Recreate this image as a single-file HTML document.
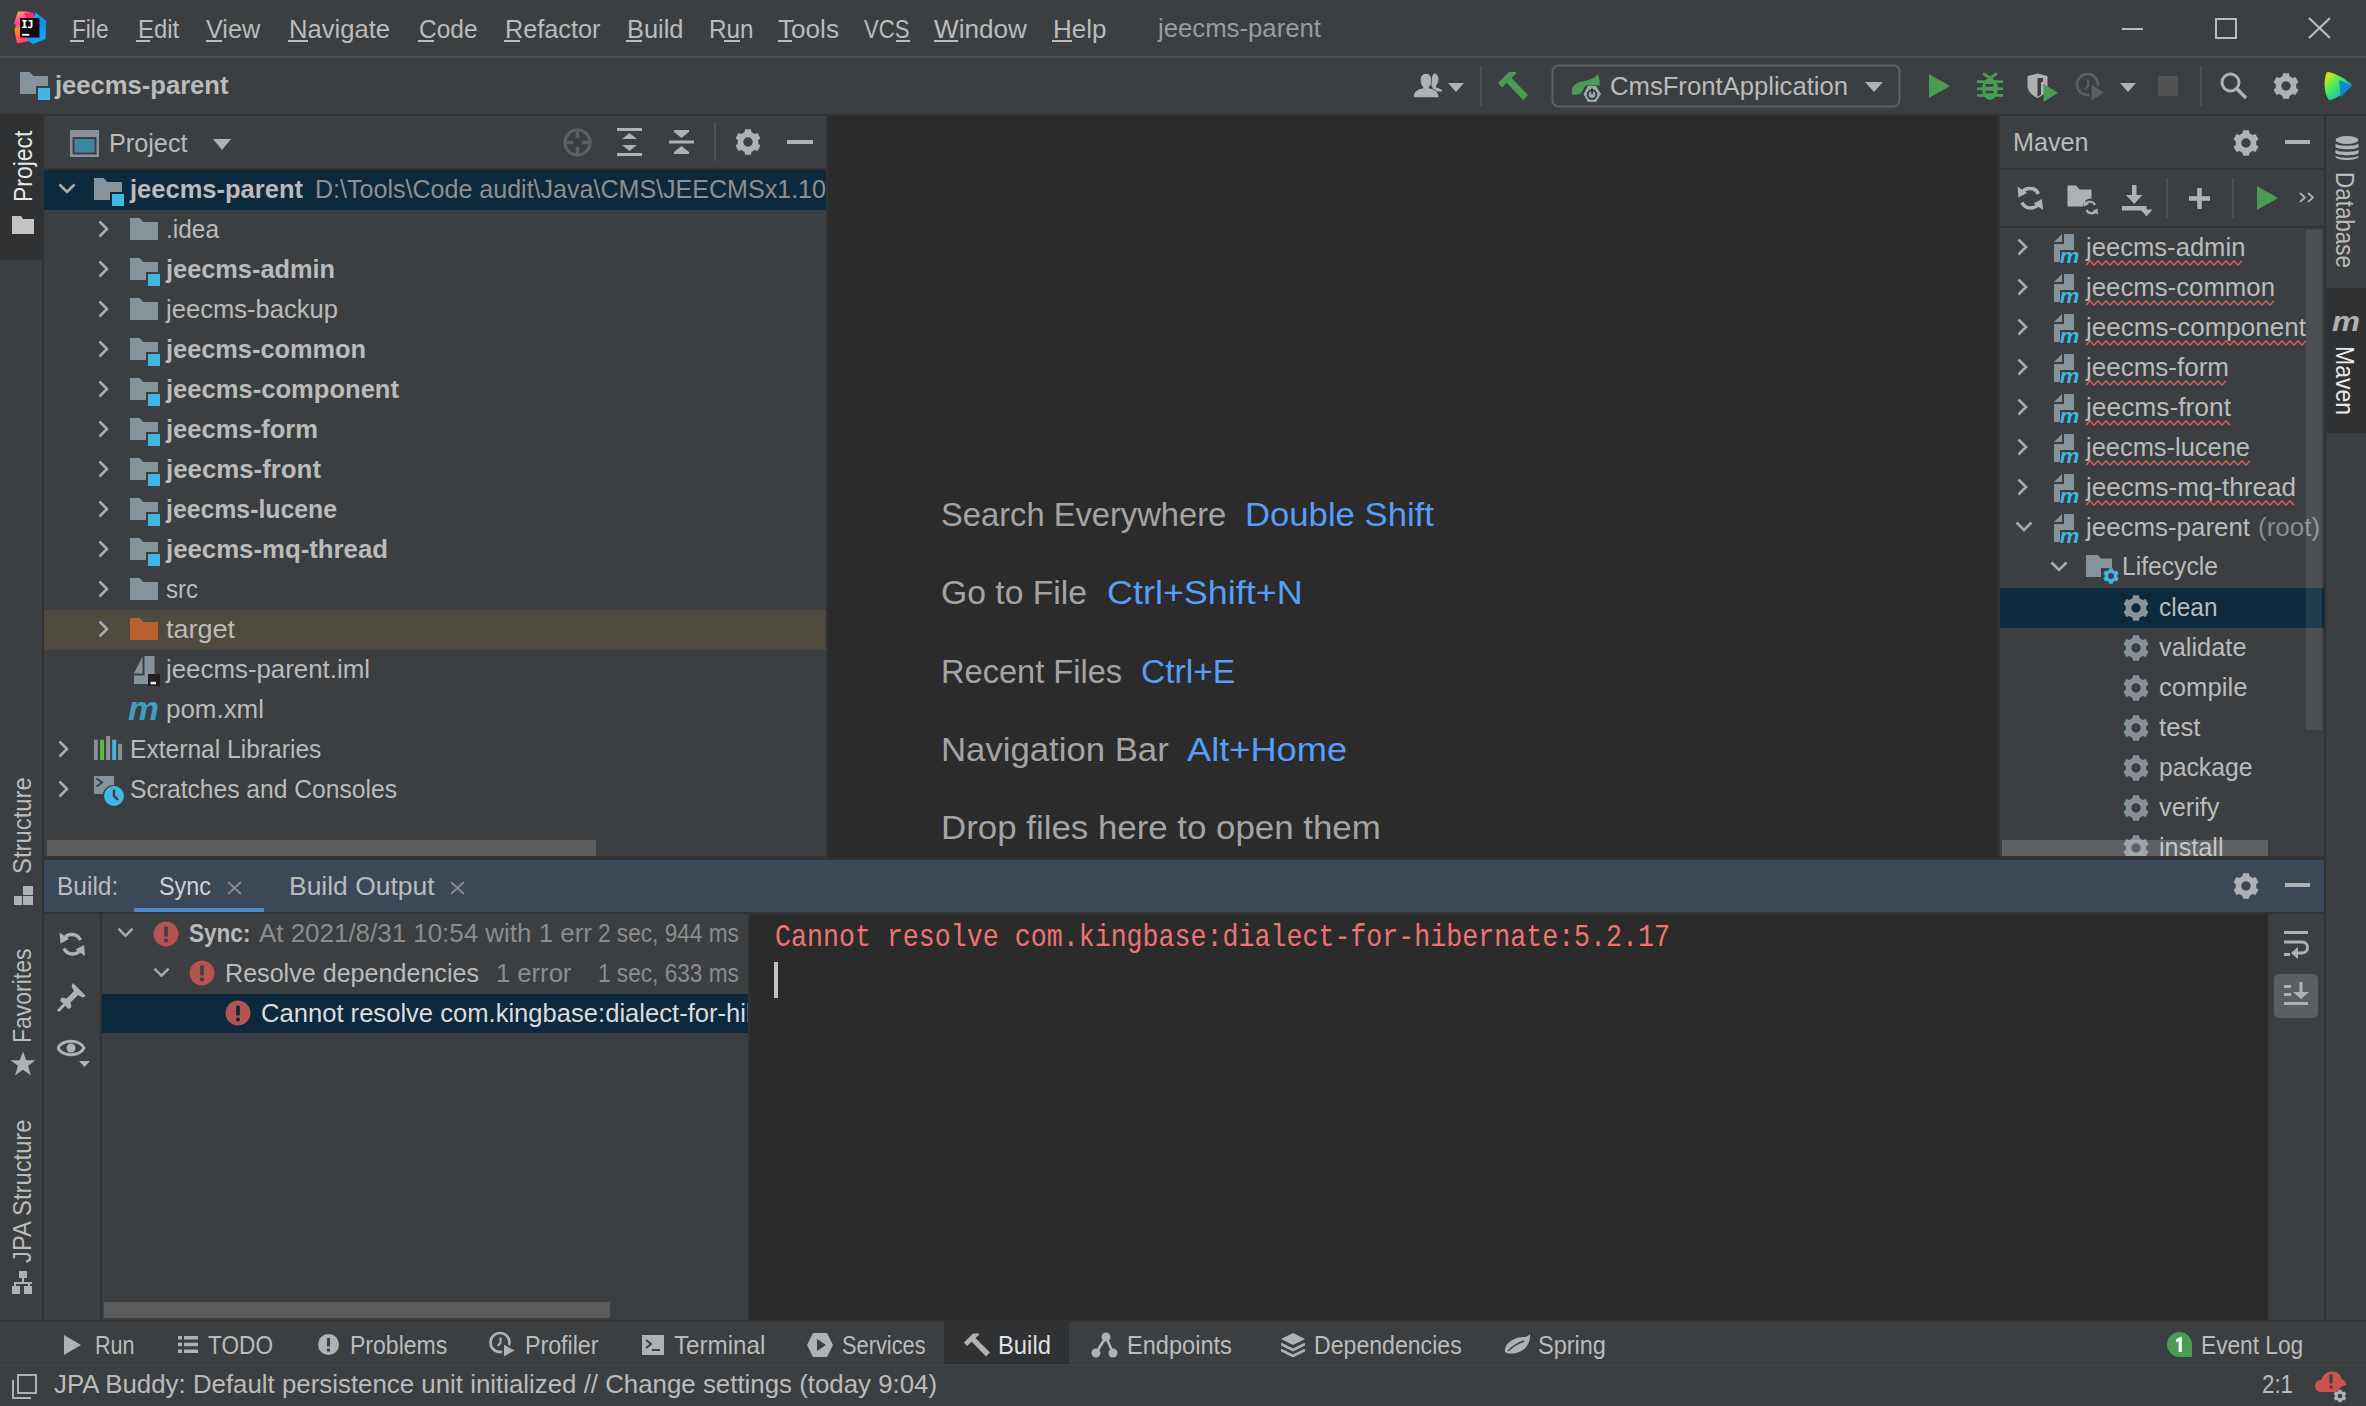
<!DOCTYPE html>
<html><head><meta charset="utf-8"><style>
html,body{margin:0;padding:0;}
body{width:2366px;height:1406px;overflow:hidden;position:relative;background:#3c3f41;font-family:'Liberation Sans', sans-serif;}
</style></head><body>
<svg width="0" height="0" style="position:absolute"><defs>
<symbol id="folder" viewBox="0 0 28 22"><path d="M0 0H9.5L13.5 4H28V22H0Z" fill="#87939a"/></symbol>
<symbol id="modfolder" viewBox="0 0 30 28"><path d="M0 0H9.5L13.5 4H28V14H16V22H0Z" fill="#87939a"/><rect x="18" y="16" width="12" height="12" fill="#40b6e0"/></symbol>
<symbol id="chevr" viewBox="0 0 11 18"><path d="M1.5 1.5L9 9L1.5 16.5" fill="none" stroke="#ababab" stroke-width="2.6"/></symbol>
<symbol id="chevd" viewBox="0 0 18 11"><path d="M1.5 1.5L9 9L16.5 1.5" fill="none" stroke="#ababab" stroke-width="2.6"/></symbol>
<symbol id="gear" viewBox="0 0 26 26"><path d="M9.47 3.32 L10.03 0.34 L15.97 0.34 L16.53 3.32 L17.08 3.54 L17.62 3.80 L18.15 4.08 L18.66 4.39 L19.15 4.74 L19.62 5.11 L22.47 4.10 L25.45 9.25 L23.14 11.22 L23.23 11.81 L23.28 12.40 L23.30 13.00 L23.28 13.60 L23.23 14.19 L23.14 14.78 L25.45 16.75 L22.47 21.90 L19.62 20.89 L19.15 21.26 L18.66 21.61 L18.15 21.92 L17.62 22.20 L17.08 22.46 L16.53 22.68 L15.97 25.66 L10.03 25.66 L9.47 22.68 L8.92 22.46 L8.38 22.20 L7.85 21.92 L7.34 21.61 L6.85 21.26 L6.38 20.89 L3.53 21.90 L0.55 16.75 L2.86 14.78 L2.77 14.19 L2.72 13.60 L2.70 13.00 L2.72 12.40 L2.77 11.81 L2.86 11.22 L0.55 9.25 L3.53 4.10 L6.38 5.11 L6.85 4.74 L7.34 4.39 L7.85 4.08 L8.38 3.80 L8.92 3.54 Z M17.70 13.00 A4.7 4.7 0 1 0 8.30 13.00 A4.7 4.7 0 1 0 17.70 13.00 Z" fill-rule="evenodd"/></symbol>
<symbol id="mvn" viewBox="0 0 27 32"><path d="M0 8H8V0Z" fill="#87939a"/><path d="M10 0H20V16H6V28H0V10H10Z" fill="#87939a"/>
<text x="5.5" y="31" font-family="Liberation Sans" font-weight="bold" font-style="italic" font-size="21" fill="#40b6e0" stroke="#3c3f41" stroke-width="1.2" paint-order="stroke" transform="scale(1.05,0.95)">m</text></symbol>
<symbol id="err" viewBox="0 0 26 26"><path fill-rule="evenodd" fill="#b55351" d="M13 0.5A12.5 12.5 0 1 0 13.01 0.5ZM11.2 5.5H14.8V15.5H11.2ZM11.2 17.7H14.8V21.3H11.2Z"/></symbol>
</defs></svg>
<div style="position:absolute;left:0px;top:56px;width:2366px;height:2px;background:#505356;"></div>
<svg style="position:absolute;left:13px;top:11px;" width="34" height="34" viewBox="0 0 34 34"><defs><linearGradient id="lgL" x1="0" y1="0" x2="0.3" y2="1"><stop offset="0" stop-color="#fcc43a"/><stop offset="0.35" stop-color="#ff3fb2"/><stop offset="0.55" stop-color="#ff8a1c"/><stop offset="1" stop-color="#ff3a78"/></linearGradient>
<linearGradient id="lgR" x1="0" y1="0" x2="0.4" y2="1"><stop offset="0" stop-color="#13d2f5"/><stop offset="0.5" stop-color="#0a8cf8"/><stop offset="1" stop-color="#10a4f6"/></linearGradient></defs>
<polygon points="5,0.5 13,0.5 20,2 23,8 16,22 17,30 4,32.5 1.5,19 3,14 1,12.5" fill="url(#lgL)"/>
<polygon points="11,1.5 20,2 23,8 14,9" fill="#fd2a62"/>
<polygon points="22.5,1.5 33,9.5 32.5,28 20,33 13,28 20,10" fill="url(#lgR)"/>
<rect x="7" y="7" width="19.5" height="19.5" fill="#120808"/>
<path d="M9.2 9H13.8V10.6H12.5V15.5H13.8V17.1H9.2V15.5H10.5V10.6H9.2Z" fill="#fff"/>
<path d="M15.5 9H19.5V15C19.5 16.8 18.5 17.3 17 17.3C16 17.3 15.2 17 14.8 16.6L15.4 15.3C15.8 15.6 16.3 15.7 16.8 15.7C17.4 15.7 17.6 15.4 17.6 14.8V10.6H15.5Z" fill="#fff"/>
<rect x="9.2" y="22.8" width="7" height="2" fill="#fff"/></svg>
<div style="position:absolute;left:71.50px;top:15.68px;font-family:'Liberation Sans', sans-serif;font-size:26.5px;line-height:1;white-space:pre;color:#bbbbbb;font-weight:normal;transform-origin:0 0;transform:scaleX(0.8547);">File</div>
<div style="position:absolute;left:70px;top:40px;width:14px;height:2px;background:#bbbbbb;"></div>
<div style="position:absolute;left:137.80px;top:15.68px;font-family:'Liberation Sans', sans-serif;font-size:26.5px;line-height:1;white-space:pre;color:#bbbbbb;font-weight:normal;transform-origin:0 0;transform:scaleX(0.9021);">Edit</div>
<div style="position:absolute;left:136px;top:40px;width:14px;height:2px;background:#bbbbbb;"></div>
<div style="position:absolute;left:206.40px;top:15.68px;font-family:'Liberation Sans', sans-serif;font-size:26.5px;line-height:1;white-space:pre;color:#bbbbbb;font-weight:normal;transform-origin:0 0;transform:scaleX(0.9514);">View</div>
<div style="position:absolute;left:206px;top:40px;width:16px;height:2px;background:#bbbbbb;"></div>
<div style="position:absolute;left:289.00px;top:15.68px;font-family:'Liberation Sans', sans-serif;font-size:26.5px;line-height:1;white-space:pre;color:#bbbbbb;font-weight:normal;transform-origin:0 0;transform:scaleX(0.9656);">Navigate</div>
<div style="position:absolute;left:288px;top:40px;width:20px;height:2px;background:#bbbbbb;"></div>
<div style="position:absolute;left:418.50px;top:15.68px;font-family:'Liberation Sans', sans-serif;font-size:26.5px;line-height:1;white-space:pre;color:#bbbbbb;font-weight:normal;transform-origin:0 0;transform:scaleX(0.9233);">Code</div>
<div style="position:absolute;left:418px;top:40px;width:16px;height:2px;background:#bbbbbb;"></div>
<div style="position:absolute;left:504.50px;top:15.68px;font-family:'Liberation Sans', sans-serif;font-size:26.5px;line-height:1;white-space:pre;color:#bbbbbb;font-weight:normal;transform-origin:0 0;transform:scaleX(0.9535);">Refactor</div>
<div style="position:absolute;left:504px;top:40px;width:16px;height:2px;background:#bbbbbb;"></div>
<div style="position:absolute;left:626.50px;top:15.68px;font-family:'Liberation Sans', sans-serif;font-size:26.5px;line-height:1;white-space:pre;color:#bbbbbb;font-weight:normal;transform-origin:0 0;transform:scaleX(0.9586);">Build</div>
<div style="position:absolute;left:626px;top:40px;width:16px;height:2px;background:#bbbbbb;"></div>
<div style="position:absolute;left:708.50px;top:15.68px;font-family:'Liberation Sans', sans-serif;font-size:26.5px;line-height:1;white-space:pre;color:#bbbbbb;font-weight:normal;transform-origin:0 0;transform:scaleX(0.9152);">Run</div>
<div style="position:absolute;left:724px;top:40px;width:16px;height:2px;background:#bbbbbb;"></div>
<div style="position:absolute;left:778.00px;top:15.68px;font-family:'Liberation Sans', sans-serif;font-size:26.5px;line-height:1;white-space:pre;color:#bbbbbb;font-weight:normal;transform-origin:0 0;transform:scaleX(0.9859);">Tools</div>
<div style="position:absolute;left:778px;top:40px;width:14px;height:2px;background:#bbbbbb;"></div>
<div style="position:absolute;left:864.00px;top:15.68px;font-family:'Liberation Sans', sans-serif;font-size:26.5px;line-height:1;white-space:pre;color:#bbbbbb;font-weight:normal;transform-origin:0 0;transform:scaleX(0.8349);">VCS</div>
<div style="position:absolute;left:896px;top:40px;width:14px;height:2px;background:#bbbbbb;"></div>
<div style="position:absolute;left:934.00px;top:15.68px;font-family:'Liberation Sans', sans-serif;font-size:26.5px;line-height:1;white-space:pre;color:#bbbbbb;font-weight:normal;transform-origin:0 0;transform:scaleX(0.9866);">Window</div>
<div style="position:absolute;left:934px;top:40px;width:24px;height:2px;background:#bbbbbb;"></div>
<div style="position:absolute;left:1052.50px;top:15.68px;font-family:'Liberation Sans', sans-serif;font-size:26.5px;line-height:1;white-space:pre;color:#bbbbbb;font-weight:normal;transform-origin:0 0;transform:scaleX(0.9814);">Help</div>
<div style="position:absolute;left:1052px;top:40px;width:20px;height:2px;background:#bbbbbb;"></div>
<div style="position:absolute;left:1158.00px;top:14.98px;font-family:'Liberation Sans', sans-serif;font-size:26.5px;line-height:1;white-space:pre;color:#9b9b9b;font-weight:normal;transform-origin:0 0;transform:scaleX(0.9708);">jeecms-parent</div>
<div style="position:absolute;left:2122px;top:28px;width:21px;height:2px;background:#bbbbbb;"></div>
<svg style="position:absolute;left:2215px;top:18px;" width="22" height="21" viewBox="0 0 22 21"><rect x="1" y="1" width="20" height="19" fill="none" stroke="#bbbbbb" stroke-width="2"/></svg>
<svg style="position:absolute;left:2308px;top:17px;" width="23" height="22" viewBox="0 0 23 22"><path d="M1 1L22 21M22 1L1 21" stroke="#bbbbbb" stroke-width="2.2"/></svg>
<svg style="position:absolute;left:20px;top:72px;" width="30" height="28"><use href="#modfolder"/></svg>
<div style="position:absolute;left:54.50px;top:71.97px;font-family:'Liberation Sans', sans-serif;font-size:26.5px;line-height:1;white-space:pre;color:#bbbbbb;font-weight:bold;transform-origin:0 0;transform:scaleX(0.9655);">jeecms-parent</div>
<div style="position:absolute;left:0px;top:114px;width:2366px;height:2px;background:#323232;"></div>
<svg style="position:absolute;left:1413px;top:73px;" width="30" height="25" viewBox="0 0 30 25"><path d="M20.5 0.5C24 0.5 25.5 3 25.5 6C25.5 9 24.5 11 23 12.5V14.5C27 15.5 29.5 16.5 29.5 18.5H21L17 9Z" fill="#afb1b3"/><path d="M13 0.8C16.8 0.8 18.3 3.8 18.3 7.5C18.3 10.5 17.3 12.5 15.8 14V15.3C21 16.3 25.5 18.5 25.5 24.3H0.8C0.8 18.5 5 16.3 10.2 15.3V14C8.7 12.5 7.7 10.5 7.7 7.5C7.7 3.8 9.2 0.8 13 0.8Z" fill="#afb1b3" stroke="#3c3f41" stroke-width="1.6" paint-order="stroke"/></svg>
<svg style="position:absolute;left:1448px;top:83px;" width="16" height="9" viewBox="0 0 16 9"><path d="M0 0H16L8 9Z" fill="#afb1b3"/></svg>
<div style="position:absolute;left:1480px;top:66px;width:2px;height:40px;background:#515151;"></div>
<svg style="position:absolute;left:1497px;top:72px;" width="32" height="29" viewBox="0 0 32 29"><path d="M1 11L12 0H19V1.5L14 6.5L5 15.5Z" fill="#499c54"/><path d="M9 10L14 5.5L31 23L26 28Z" fill="#499c54"/></svg>
<svg style="position:absolute;left:1551px;top:64px;" width="350" height="44" viewBox="0 0 350 44"><rect x="1.5" y="1.5" width="347" height="41" rx="6" fill="none" stroke="#5e6163" stroke-width="2"/></svg>
<svg style="position:absolute;left:1571px;top:73px;" width="32" height="31" viewBox="0 0 32 31"><path d="M1.5 22C-1 15 3 10 11 8.5C19 7 24 5 26.5 1C28.5 5 29 9.5 28.5 12.5L25 12.5H14.5L9.5 21Z" fill="#499c54"/><polygon points="17,13 25,13 30,21 25,29 17,29 12.5,21" fill="#9aa7b0"/><circle cx="21" cy="21.5" r="4.3" fill="none" stroke="#2e3133" stroke-width="1.7"/><rect x="20.2" y="15.5" width="1.7" height="5.5" fill="#2e3133"/></svg>
<div style="position:absolute;left:1610.00px;top:72.97px;font-family:'Liberation Sans', sans-serif;font-size:26.5px;line-height:1;white-space:pre;color:#bbbbbb;font-weight:normal;transform-origin:0 0;transform:scaleX(0.9677);">CmsFrontApplication</div>
<svg style="position:absolute;left:1865px;top:82px;" width="18" height="10" viewBox="0 0 18 10"><path d="M0 0H18L9 10Z" fill="#afb1b3"/></svg>
<svg style="position:absolute;left:1929px;top:74px;" width="21" height="24" viewBox="0 0 21 24"><path d="M0 0L21 12L0 24Z" fill="#499c54"/></svg>
<svg style="position:absolute;left:1977px;top:72px;" width="26" height="28" viewBox="0 0 26 28"><polyline points="6,1.5 13,6 20,1.5" fill="none" stroke="#499c54" stroke-width="3"/><ellipse cx="13" cy="17" rx="8" ry="11" fill="#499c54"/><rect x="0" y="8.3" width="26" height="2.8" fill="#499c54"/><rect x="0" y="15.4" width="26" height="2.7" fill="#499c54"/><rect x="0" y="22" width="26" height="2.8" fill="#499c54"/><rect x="8.5" y="12" width="8" height="2.7" fill="#3c3f41"/><rect x="8.5" y="18.8" width="8" height="2.4" fill="#3c3f41"/></svg>
<svg style="position:absolute;left:2027px;top:73px;" width="31" height="29" viewBox="0 0 31 29"><path d="M0.5 3L10.5 0.5L20.5 3V13C20.5 18 16 22.5 10.5 25C5 22.5 0.5 18 0.5 13Z" fill="#afb1b3"/><path d="M10.5 5H16V9H14V21.5L10.5 24V5Z" fill="#3c3f41"/><path d="M16.5 11L31 19.8L16.5 29Z" fill="#499c54"/></svg>
<svg style="position:absolute;left:2075px;top:72px;" width="31" height="31" viewBox="0 0 31 31"><circle cx="12.5" cy="12.5" r="10.5" fill="none" stroke="#5d5f61" stroke-width="2.6"/><path d="M13 8V14L10 17.5" stroke="#5d5f61" stroke-width="2" fill="none"/><path d="M15.5 10.5L31 20.5L15.5 30.5Z" fill="#5d5f61" stroke="#3c3f41" stroke-width="2.2"/></svg>
<svg style="position:absolute;left:2120px;top:83px;" width="16" height="9" viewBox="0 0 16 9"><path d="M0 0H16L8 9Z" fill="#afb1b3"/></svg>
<div style="position:absolute;left:2158px;top:76px;width:20px;height:20px;background:#505254;"></div>
<div style="position:absolute;left:2200px;top:66px;width:2px;height:40px;background:#515151;"></div>
<svg style="position:absolute;left:2220px;top:72px;" width="28" height="28" viewBox="0 0 28 28"><circle cx="10.5" cy="10.5" r="8.5" fill="none" stroke="#afb1b3" stroke-width="3"/><path d="M16.5 16.5L26 26" stroke="#afb1b3" stroke-width="3.5"/></svg>
<svg style="position:absolute;left:2273px;top:73px;fill:#afb1b3;" width="26" height="26"><use href="#gear"/></svg>
<svg style="position:absolute;left:2323px;top:72px;" width="30" height="28" viewBox="0 0 30 28"><defs><linearGradient id="lg1" x1="0" y1="0" x2="1" y2="1"><stop offset="0" stop-color="#f6e40c"/><stop offset="0.45" stop-color="#3bea62"/><stop offset="1" stop-color="#087cfa"/></linearGradient></defs><path d="M4 0C10 0 22 6 29 13C24 20 12 28 6 28C1 22 0 8 4 0Z" fill="url(#lg1)"/><path d="M16 8L29 13L18 26Z" fill="#0a7bd6" opacity="0.8"/></svg>
<div style="position:absolute;left:42px;top:116px;width:2px;height:1204px;background:#323232;"></div>
<div style="position:absolute;left:0px;top:116px;width:42px;height:144px;background:#2f3133;"></div>
<div style="position:absolute;left:9.98px;top:202.30px;font-family:'Liberation Sans', sans-serif;font-size:26.5px;line-height:1;white-space:pre;color:#e8e8e8;font-weight:normal;transform-origin:0 0;transform:rotate(-90deg) scaleX(0.8644);">Project</div>
<svg style="position:absolute;left:12px;top:216px;" width="22" height="18" viewBox="0 0 22 18"><path d="M0 0H9L11 3H22V18H0Z" fill="#c4c4c4"/></svg>
<div style="position:absolute;left:9.48px;top:873.70px;font-family:'Liberation Sans', sans-serif;font-size:26.5px;line-height:1;white-space:pre;color:#bbbbbb;font-weight:normal;transform-origin:0 0;transform:rotate(-90deg) scaleX(0.8994);">Structure</div>
<svg style="position:absolute;left:14px;top:886px;" width="19" height="19" viewBox="0 0 19 19"><rect x="9" y="0" width="10" height="9" fill="#afb1b3"/><rect x="0" y="10" width="8" height="9" fill="#afb1b3"/><rect x="9" y="10" width="10" height="9" fill="#afb1b3"/></svg>
<div style="position:absolute;left:9.48px;top:1043.00px;font-family:'Liberation Sans', sans-serif;font-size:26.5px;line-height:1;white-space:pre;color:#bbbbbb;font-weight:normal;transform-origin:0 0;transform:rotate(-90deg) scaleX(0.8662);">Favorites</div>
<svg style="position:absolute;left:10px;top:1051px;" width="26" height="26" viewBox="0 0 26 26"><path d="M13 0.5L16.3 9.2H25.5L18.1 14.8L20.9 24.5L13 18.8L5.1 24.5L7.9 14.8L0.5 9.2H9.7Z" fill="#afb1b3"/></svg>
<div style="position:absolute;left:9.48px;top:1263.00px;font-family:'Liberation Sans', sans-serif;font-size:26.5px;line-height:1;white-space:pre;color:#bbbbbb;font-weight:normal;transform-origin:0 0;transform:rotate(-90deg) scaleX(0.8965);">JPA Structure</div>
<svg style="position:absolute;left:12px;top:1271px;" width="22" height="24" viewBox="0 0 22 24"><rect x="7" y="0" width="8" height="7" fill="#afb1b3"/><rect x="10" y="7" width="2" height="5" fill="#afb1b3"/><rect x="2" y="11" width="18" height="2" fill="#afb1b3"/><rect x="0" y="15" width="8" height="8" fill="#afb1b3"/><rect x="12" y="15" width="8" height="8" fill="#afb1b3"/><rect x="2" y="12" width="2" height="4" fill="#afb1b3"/><rect x="16" y="12" width="2" height="4" fill="#afb1b3"/></svg>
<div style="position:absolute;left:2324px;top:116px;width:2px;height:1204px;background:#323232;"></div>
<div style="position:absolute;left:2326px;top:288px;width:40px;height:145px;background:#2f3133;"></div>
<svg style="position:absolute;left:2335px;top:136px;" width="24" height="25" viewBox="0 0 24 25"><ellipse cx="12" cy="4" rx="11.5" ry="4" fill="#afb1b3"/><path d="M0.5 7.5C2 10.5 22 10.5 23.5 7.5V11C22 14 2 14 0.5 11Z" fill="#afb1b3"/><path d="M0.5 13.5C2 16.5 22 16.5 23.5 13.5V17C22 20 2 20 0.5 17Z" fill="#afb1b3"/><path d="M0.5 19.5C2 22.5 22 22.5 23.5 19.5V21C22 25 2 25 0.5 21Z" fill="#afb1b3"/></svg>
<div style="position:absolute;left:2358.03px;top:171.70px;font-family:'Liberation Sans', sans-serif;font-size:26.5px;line-height:1;white-space:pre;color:#bbbbbb;font-weight:normal;transform-origin:0 0;transform:rotate(90deg) scaleX(0.8462);">Database</div>
<div style="position:absolute;left:2332.00px;top:307.70px;font-family:'Liberation Sans', sans-serif;font-size:28px;line-height:1;white-space:pre;color:#afb1b3;font-weight:bold;transform-origin:0 0;transform:scaleX(1.1242);font-style:italic;">m</div>
<div style="position:absolute;left:2358.03px;top:345.80px;font-family:'Liberation Sans', sans-serif;font-size:26.5px;line-height:1;white-space:pre;color:#e8e8e8;font-weight:normal;transform-origin:0 0;transform:rotate(90deg) scaleX(0.8699);">Maven</div>
<div style="position:absolute;left:44px;top:168px;width:782px;height:2px;background:#323232;"></div>
<div style="position:absolute;left:826px;top:116px;width:2px;height:742px;background:#323232;"></div>
<svg style="position:absolute;left:70px;top:130px;" width="29" height="27" viewBox="0 0 29 27"><rect x="0" y="0" width="29" height="27" fill="#87939a"/><rect x="2.5" y="7" width="24" height="17.5" fill="#3c3f41"/><rect x="4.5" y="9" width="20" height="13.5" fill="#3e86a0"/></svg>
<div style="position:absolute;left:109.30px;top:129.67px;font-family:'Liberation Sans', sans-serif;font-size:26.5px;line-height:1;white-space:pre;color:#bbbbbb;font-weight:normal;transform-origin:0 0;transform:scaleX(0.9517);">Project</div>
<svg style="position:absolute;left:213px;top:139px;" width="18" height="11" viewBox="0 0 18 11"><path d="M0 0H18L9 11Z" fill="#afb1b3"/></svg>
<svg style="position:absolute;left:563px;top:128px;" width="29" height="29" viewBox="0 0 29 29"><circle cx="14.5" cy="14.5" r="12.5" fill="none" stroke="#5d5f61" stroke-width="3.2"/><path d="M14.5 2V10M14.5 19V27M2 14.5H10M19 14.5H27" stroke="#5d5f61" stroke-width="3.6"/></svg>
<svg style="position:absolute;left:617px;top:128px;" width="25" height="28" viewBox="0 0 25 28"><rect x="0" y="0" width="25" height="3" fill="#afb1b3"/><rect x="0" y="25" width="25" height="3" fill="#afb1b3"/><path d="M12.5 5L20 11H5Z" fill="#afb1b3"/><path d="M12.5 23L20 17H5Z" fill="#afb1b3"/></svg>
<svg style="position:absolute;left:669px;top:128px;" width="25" height="28" viewBox="0 0 25 28"><rect x="0" y="12.5" width="25" height="3" fill="#afb1b3"/><path d="M12.5 10L20 4H5Z" fill="#afb1b3"/><path d="M12.5 18L20 24H5Z" fill="#afb1b3"/><rect x="5" y="2" width="15" height="2" fill="#afb1b3"/><rect x="5" y="24" width="15" height="2" fill="#afb1b3"/></svg>
<div style="position:absolute;left:714px;top:122px;width:2px;height:39px;background:#515151;"></div>
<svg style="position:absolute;left:735px;top:129px;fill:#afb1b3;" width="26" height="26"><use href="#gear"/></svg>
<div style="position:absolute;left:787px;top:140px;width:26px;height:4px;background:#afb1b3;"></div>
<div style="position:absolute;left:44px;top:170px;width:782px;height:40px;background:#0d293e;"></div>
<div style="position:absolute;left:44px;top:610px;width:782px;height:40px;background:#4e4a3f;"></div>
<svg style="position:absolute;left:58px;top:183px;" width="18" height="11"><use href="#chevd"/></svg>
<svg style="position:absolute;left:94px;top:178px;" width="30" height="28"><use href="#modfolder"/></svg>
<div style="position:absolute;left:130.00px;top:176.47px;font-family:'Liberation Sans', sans-serif;font-size:26.5px;line-height:1;white-space:pre;color:#bbbbbb;font-weight:bold;transform-origin:0 0;transform:scaleX(0.9627);">jeecms-parent</div>
<div style="position:absolute;left:315.00px;top:176.47px;font-family:'Liberation Sans', sans-serif;font-size:26.5px;line-height:1;white-space:pre;color:#8f8f8f;font-weight:normal;transform-origin:0 0;transform:scaleX(0.9453);">D:\Tools\Code audit\Java\CMS\JEECMSx1.10</div>
<svg style="position:absolute;left:97.5px;top:220px;" width="11" height="18"><use href="#chevr"/></svg>
<svg style="position:absolute;left:130px;top:218px;" width="28" height="22"><use href="#folder"/></svg>
<div style="position:absolute;left:166.00px;top:216.47px;font-family:'Liberation Sans', sans-serif;font-size:26.5px;line-height:1;white-space:pre;color:#bbbbbb;font-weight:normal;transform-origin:0 0;transform:scaleX(0.9222);">.idea</div>
<svg style="position:absolute;left:97.5px;top:260px;" width="11" height="18"><use href="#chevr"/></svg>
<svg style="position:absolute;left:130px;top:258px;" width="30" height="28"><use href="#modfolder"/></svg>
<div style="position:absolute;left:166.00px;top:256.48px;font-family:'Liberation Sans', sans-serif;font-size:26.5px;line-height:1;white-space:pre;color:#bbbbbb;font-weight:bold;transform-origin:0 0;transform:scaleX(0.9562);">jeecms-admin</div>
<svg style="position:absolute;left:97.5px;top:300px;" width="11" height="18"><use href="#chevr"/></svg>
<svg style="position:absolute;left:130px;top:298px;" width="28" height="22"><use href="#folder"/></svg>
<div style="position:absolute;left:166.00px;top:296.48px;font-family:'Liberation Sans', sans-serif;font-size:26.5px;line-height:1;white-space:pre;color:#bbbbbb;font-weight:normal;transform-origin:0 0;transform:scaleX(0.9651);">jeecms-backup</div>
<svg style="position:absolute;left:97.5px;top:340px;" width="11" height="18"><use href="#chevr"/></svg>
<svg style="position:absolute;left:130px;top:338px;" width="30" height="28"><use href="#modfolder"/></svg>
<div style="position:absolute;left:166.00px;top:336.48px;font-family:'Liberation Sans', sans-serif;font-size:26.5px;line-height:1;white-space:pre;color:#bbbbbb;font-weight:bold;transform-origin:0 0;transform:scaleX(0.9563);">jeecms-common</div>
<svg style="position:absolute;left:97.5px;top:380px;" width="11" height="18"><use href="#chevr"/></svg>
<svg style="position:absolute;left:130px;top:378px;" width="30" height="28"><use href="#modfolder"/></svg>
<div style="position:absolute;left:166.00px;top:376.48px;font-family:'Liberation Sans', sans-serif;font-size:26.5px;line-height:1;white-space:pre;color:#bbbbbb;font-weight:bold;transform-origin:0 0;transform:scaleX(0.9647);">jeecms-component</div>
<svg style="position:absolute;left:97.5px;top:420px;" width="11" height="18"><use href="#chevr"/></svg>
<svg style="position:absolute;left:130px;top:418px;" width="30" height="28"><use href="#modfolder"/></svg>
<div style="position:absolute;left:166.00px;top:416.48px;font-family:'Liberation Sans', sans-serif;font-size:26.5px;line-height:1;white-space:pre;color:#bbbbbb;font-weight:bold;transform-origin:0 0;transform:scaleX(0.9645);">jeecms-form</div>
<svg style="position:absolute;left:97.5px;top:460px;" width="11" height="18"><use href="#chevr"/></svg>
<svg style="position:absolute;left:130px;top:458px;" width="30" height="28"><use href="#modfolder"/></svg>
<div style="position:absolute;left:166.00px;top:456.48px;font-family:'Liberation Sans', sans-serif;font-size:26.5px;line-height:1;white-space:pre;color:#bbbbbb;font-weight:bold;transform-origin:0 0;transform:scaleX(0.9746);">jeecms-front</div>
<svg style="position:absolute;left:97.5px;top:500px;" width="11" height="18"><use href="#chevr"/></svg>
<svg style="position:absolute;left:130px;top:498px;" width="30" height="28"><use href="#modfolder"/></svg>
<div style="position:absolute;left:166.00px;top:496.48px;font-family:'Liberation Sans', sans-serif;font-size:26.5px;line-height:1;white-space:pre;color:#bbbbbb;font-weight:bold;transform-origin:0 0;transform:scaleX(0.9362);">jeecms-lucene</div>
<svg style="position:absolute;left:97.5px;top:540px;" width="11" height="18"><use href="#chevr"/></svg>
<svg style="position:absolute;left:130px;top:538px;" width="30" height="28"><use href="#modfolder"/></svg>
<div style="position:absolute;left:166.00px;top:536.48px;font-family:'Liberation Sans', sans-serif;font-size:26.5px;line-height:1;white-space:pre;color:#bbbbbb;font-weight:bold;transform-origin:0 0;transform:scaleX(0.9726);">jeecms-mq-thread</div>
<svg style="position:absolute;left:97.5px;top:580px;" width="11" height="18"><use href="#chevr"/></svg>
<svg style="position:absolute;left:130px;top:578px;" width="28" height="22"><use href="#folder"/></svg>
<div style="position:absolute;left:166.00px;top:576.48px;font-family:'Liberation Sans', sans-serif;font-size:26.5px;line-height:1;white-space:pre;color:#bbbbbb;font-weight:normal;transform-origin:0 0;transform:scaleX(0.9058);">src</div>
<svg style="position:absolute;left:97.5px;top:620px;" width="11" height="18"><use href="#chevr"/></svg>
<div style="position:absolute;left:166.00px;top:616.48px;font-family:'Liberation Sans', sans-serif;font-size:26.5px;line-height:1;white-space:pre;color:#bbbbbb;font-weight:normal;transform-origin:0 0;transform:scaleX(1.0182);">target</div>
<svg style="position:absolute;left:130px;top:618px;" width="28" height="22" viewBox="0 0 28 22"><path d="M0 0H9.5L13.5 4H28V22H0Z" fill="#b8602f"/></svg>
<div style="position:absolute;left:166.00px;top:656.48px;font-family:'Liberation Sans', sans-serif;font-size:26.5px;line-height:1;white-space:pre;color:#bbbbbb;font-weight:normal;transform-origin:0 0;transform:scaleX(0.9755);">jeecms-parent.iml</div>
<svg style="position:absolute;left:134px;top:656px;" width="27" height="31" viewBox="0 0 27 31"><path d="M0 17.5H8.5V0.5Z" fill="#87939a"/><path d="M10.5 0H20.5V18H14V28H0V19.5H10.5Z" fill="#87939a"/><rect x="14" y="18" width="12" height="12" fill="#231f20"/><rect x="16.5" y="25.8" width="5.5" height="2.5" fill="#e8e8e8"/></svg>
<div style="position:absolute;left:166.00px;top:696.48px;font-family:'Liberation Sans', sans-serif;font-size:26.5px;line-height:1;white-space:pre;color:#bbbbbb;font-weight:normal;transform-origin:0 0;transform:scaleX(0.9786);">pom.xml</div>
<div style="position:absolute;left:128.00px;top:691.95px;font-family:'Liberation Sans', sans-serif;font-size:33px;line-height:1;white-space:pre;color:#3d9fc2;font-weight:bold;transform-origin:0 0;transform:scaleX(1.0564);font-style:italic;">m</div>
<svg style="position:absolute;left:58px;top:740px;" width="11" height="18"><use href="#chevr"/></svg>
<div style="position:absolute;left:130.00px;top:736.48px;font-family:'Liberation Sans', sans-serif;font-size:26.5px;line-height:1;white-space:pre;color:#bbbbbb;font-weight:normal;transform-origin:0 0;transform:scaleX(0.9282);">External Libraries</div>
<svg style="position:absolute;left:94px;top:736px;" width="29" height="24" viewBox="0 0 29 24"><rect x="0" y="3.7" width="3.7" height="20.3" fill="#87939a"/><rect x="6.1" y="3.7" width="4" height="20.3" fill="#62b543"/><rect x="12.1" y="0" width="4" height="24" fill="#87939a"/><rect x="18.2" y="3.7" width="4" height="20.3" fill="#40b6e0"/><rect x="24.1" y="7.8" width="3.9" height="16.2" fill="#87939a"/></svg>
<svg style="position:absolute;left:58px;top:780px;" width="11" height="18"><use href="#chevr"/></svg>
<div style="position:absolute;left:130.00px;top:776.48px;font-family:'Liberation Sans', sans-serif;font-size:26.5px;line-height:1;white-space:pre;color:#bbbbbb;font-weight:normal;transform-origin:0 0;transform:scaleX(0.9295);">Scratches and Consoles</div>
<svg style="position:absolute;left:94px;top:776px;" width="31" height="31" viewBox="0 0 31 31"><path fill-rule="evenodd" d="M0 0H20V9A11.5 11.5 0 0 0 8.5 18H0Z" fill="#87939a"/><path d="M2.5 2.5L8 6.5L2.5 10.5" stroke="#3c3f41" stroke-width="2" fill="none"/><circle cx="20" cy="20" r="10" fill="#40b6e0"/><path d="M20 13.5V20L24 24" stroke="#3c3f41" stroke-width="2.4" fill="none"/></svg>
<div style="position:absolute;left:47px;top:840px;width:549px;height:16px;background:#5b5b5c;"></div>
<div style="position:absolute;left:828px;top:116px;width:1170px;height:742px;background:#2b2b2b;"></div>
<div style="position:absolute;left:1998px;top:116px;width:2px;height:742px;background:#323232;"></div>
<div style="position:absolute;left:940.70px;top:497.10px;font-family:'Liberation Sans', sans-serif;font-size:34px;line-height:1;white-space:pre;color:#a4a4a4;font-weight:normal;transform-origin:0 0;transform:scaleX(0.9613);">Search Everywhere</div>
<div style="position:absolute;left:1244.80px;top:497.10px;font-family:'Liberation Sans', sans-serif;font-size:34px;line-height:1;white-space:pre;color:#589df6;font-weight:normal;transform-origin:0 0;transform:scaleX(1.0198);">Double Shift</div>
<div style="position:absolute;left:940.70px;top:575.30px;font-family:'Liberation Sans', sans-serif;font-size:34px;line-height:1;white-space:pre;color:#a4a4a4;font-weight:normal;transform-origin:0 0;transform:scaleX(0.9906);">Go to File</div>
<div style="position:absolute;left:1106.60px;top:575.30px;font-family:'Liberation Sans', sans-serif;font-size:34px;line-height:1;white-space:pre;color:#589df6;font-weight:normal;transform-origin:0 0;transform:scaleX(1.0568);">Ctrl+Shift+N</div>
<div style="position:absolute;left:940.70px;top:653.80px;font-family:'Liberation Sans', sans-serif;font-size:34px;line-height:1;white-space:pre;color:#a4a4a4;font-weight:normal;transform-origin:0 0;transform:scaleX(0.9584);">Recent Files</div>
<div style="position:absolute;left:1140.50px;top:653.80px;font-family:'Liberation Sans', sans-serif;font-size:34px;line-height:1;white-space:pre;color:#589df6;font-weight:normal;transform-origin:0 0;transform:scaleX(0.9882);">Ctrl+E</div>
<div style="position:absolute;left:940.70px;top:732.00px;font-family:'Liberation Sans', sans-serif;font-size:34px;line-height:1;white-space:pre;color:#a4a4a4;font-weight:normal;transform-origin:0 0;transform:scaleX(1.0210);">Navigation Bar</div>
<div style="position:absolute;left:1186.50px;top:732.00px;font-family:'Liberation Sans', sans-serif;font-size:34px;line-height:1;white-space:pre;color:#589df6;font-weight:normal;transform-origin:0 0;transform:scaleX(1.0657);">Alt+Home</div>
<div style="position:absolute;left:940.70px;top:809.60px;font-family:'Liberation Sans', sans-serif;font-size:34px;line-height:1;white-space:pre;color:#a4a4a4;font-weight:normal;transform-origin:0 0;transform:scaleX(1.0251);">Drop files here to open them</div>
<div style="position:absolute;left:2000px;top:168px;width:324px;height:2px;background:#323232;"></div>
<div style="position:absolute;left:2000px;top:226px;width:324px;height:2px;background:#323232;"></div>
<div style="position:absolute;left:2012.50px;top:129.47px;font-family:'Liberation Sans', sans-serif;font-size:26.5px;line-height:1;white-space:pre;color:#bbbbbb;font-weight:normal;transform-origin:0 0;transform:scaleX(0.9491);">Maven</div>
<svg style="position:absolute;left:2233px;top:130px;fill:#afb1b3;" width="26" height="26"><use href="#gear"/></svg>
<div style="position:absolute;left:2285px;top:140px;width:25px;height:4px;background:#afb1b3;"></div>
<svg style="position:absolute;left:2017px;top:185px;" width="27" height="27" viewBox="0 0 27 27"><path d="M21.5 9A9.5 9.5 0 0 0 4.5 8.5" fill="none" stroke="#afb1b3" stroke-width="3.6"/><path d="M0.5 1.5L1.5 12.5L10 8Z" fill="#afb1b3"/><path d="M5 17.5A9.5 9.5 0 0 0 22 18" fill="none" stroke="#afb1b3" stroke-width="3.6"/><path d="M26 25L25 14L16.5 18.5Z" fill="#afb1b3"/></svg>
<svg style="position:absolute;left:2067px;top:185px;" width="32" height="30" viewBox="0 0 32 30"><path d="M0.5 0.5H9L12.5 4.5H24.5V13.5A8 8 0 0 0 16 21.5H0.5Z" fill="#afb1b3"/><path d="M28 20A5.5 5.5 0 0 0 18.5 19" fill="none" stroke="#afb1b3" stroke-width="2.2"/><path d="M16.5 15.5L17 21.5L22 19Z" fill="#afb1b3"/><path d="M19.5 25A5.5 5.5 0 0 0 29 26" fill="none" stroke="#afb1b3" stroke-width="2.2"/><path d="M31 29.5L30.5 23.5L25.5 26Z" fill="#afb1b3"/></svg>
<svg style="position:absolute;left:2122px;top:185px;" width="31" height="32" viewBox="0 0 31 32"><rect x="10" y="0" width="4.5" height="11" fill="#afb1b3"/><path d="M4 10H20.5L12.25 19Z" fill="#afb1b3"/><rect x="0" y="21" width="24.5" height="4.5" fill="#afb1b3"/><path d="M18.5 24.5H30.5L24.5 31.5Z" fill="#afb1b3"/></svg>
<div style="position:absolute;left:2166px;top:178px;width:2px;height:40px;background:#515151;"></div>
<svg style="position:absolute;left:2189px;top:188px;" width="21" height="21" viewBox="0 0 21 21"><rect x="8.2" y="0" width="4.6" height="21" fill="#afb1b3"/><rect x="0" y="8.2" width="21" height="4.6" fill="#afb1b3"/></svg>
<div style="position:absolute;left:2232px;top:178px;width:2px;height:40px;background:#515151;"></div>
<svg style="position:absolute;left:2257px;top:186px;" width="21" height="24" viewBox="0 0 21 24"><path d="M0 0L21 12L0 24Z" fill="#499c54"/></svg>
<svg style="position:absolute;left:2299px;top:192px;" width="16" height="11" viewBox="0 0 16 11"><path d="M1 1L6 5.5L1 10M9 1L14 5.5L9 10" fill="none" stroke="#afb1b3" stroke-width="1.8"/></svg>
<div style="position:absolute;left:2000px;top:588px;width:324px;height:40px;background:#0d293e;"></div>
<svg style="position:absolute;left:2017px;top:238px;" width="11" height="18"><use href="#chevr"/></svg>
<svg style="position:absolute;left:2054px;top:234px;" width="27" height="32"><use href="#mvn"/></svg>
<div style="position:absolute;left:2086.00px;top:234.47px;font-family:'Liberation Sans', sans-serif;font-size:26.5px;line-height:1;white-space:pre;color:#bbbbbb;font-weight:normal;transform-origin:0 0;transform:scaleX(0.9663);">jeecms-admin</div>
<svg style="position:absolute;left:2086px;top:260px" width="161.4000000000001" height="7"><polyline points="0.0,5.2 4.0,0.8 8.0,5.2 12.0,0.8 16.0,5.2 20.0,0.8 24.0,5.2 28.0,0.8 32.0,5.2 36.0,0.8 40.0,5.2 44.0,0.8 48.0,5.2 52.0,0.8 56.0,5.2 60.0,0.8 64.0,5.2 68.0,0.8 72.0,5.2 76.0,0.8 80.0,5.2 84.0,0.8 88.0,5.2 92.0,0.8 96.0,5.2 100.0,0.8 104.0,5.2 108.0,0.8 112.0,5.2 116.0,0.8 120.0,5.2 124.0,0.8 128.0,5.2 132.0,0.8 136.0,5.2 140.0,0.8 144.0,5.2 148.0,0.8 152.0,5.2 156.0,0.8" fill="none" stroke="#d65c5c" stroke-width="1.5"/></svg>
<svg style="position:absolute;left:2017px;top:278px;" width="11" height="18"><use href="#chevr"/></svg>
<svg style="position:absolute;left:2054px;top:274px;" width="27" height="32"><use href="#mvn"/></svg>
<div style="position:absolute;left:2086.00px;top:274.48px;font-family:'Liberation Sans', sans-serif;font-size:26.5px;line-height:1;white-space:pre;color:#bbbbbb;font-weight:normal;transform-origin:0 0;transform:scaleX(0.9723);">jeecms-common</div>
<svg style="position:absolute;left:2086px;top:300px" width="191" height="7"><polyline points="0.0,5.2 4.0,0.8 8.0,5.2 12.0,0.8 16.0,5.2 20.0,0.8 24.0,5.2 28.0,0.8 32.0,5.2 36.0,0.8 40.0,5.2 44.0,0.8 48.0,5.2 52.0,0.8 56.0,5.2 60.0,0.8 64.0,5.2 68.0,0.8 72.0,5.2 76.0,0.8 80.0,5.2 84.0,0.8 88.0,5.2 92.0,0.8 96.0,5.2 100.0,0.8 104.0,5.2 108.0,0.8 112.0,5.2 116.0,0.8 120.0,5.2 124.0,0.8 128.0,5.2 132.0,0.8 136.0,5.2 140.0,0.8 144.0,5.2 148.0,0.8 152.0,5.2 156.0,0.8 160.0,5.2 164.0,0.8 168.0,5.2 172.0,0.8 176.0,5.2 180.0,0.8 184.0,5.2 188.0,0.8" fill="none" stroke="#d65c5c" stroke-width="1.5"/></svg>
<svg style="position:absolute;left:2017px;top:318px;" width="11" height="18"><use href="#chevr"/></svg>
<svg style="position:absolute;left:2054px;top:314px;" width="27" height="32"><use href="#mvn"/></svg>
<div style="position:absolute;left:2086.00px;top:314.48px;font-family:'Liberation Sans', sans-serif;font-size:26.5px;line-height:1;white-space:pre;color:#bbbbbb;font-weight:normal;transform-origin:0 0;transform:scaleX(0.9826);">jeecms-component</div>
<svg style="position:absolute;left:2086px;top:340px" width="222" height="7"><polyline points="0.0,5.2 4.0,0.8 8.0,5.2 12.0,0.8 16.0,5.2 20.0,0.8 24.0,5.2 28.0,0.8 32.0,5.2 36.0,0.8 40.0,5.2 44.0,0.8 48.0,5.2 52.0,0.8 56.0,5.2 60.0,0.8 64.0,5.2 68.0,0.8 72.0,5.2 76.0,0.8 80.0,5.2 84.0,0.8 88.0,5.2 92.0,0.8 96.0,5.2 100.0,0.8 104.0,5.2 108.0,0.8 112.0,5.2 116.0,0.8 120.0,5.2 124.0,0.8 128.0,5.2 132.0,0.8 136.0,5.2 140.0,0.8 144.0,5.2 148.0,0.8 152.0,5.2 156.0,0.8 160.0,5.2 164.0,0.8 168.0,5.2 172.0,0.8 176.0,5.2 180.0,0.8 184.0,5.2 188.0,0.8 192.0,5.2 196.0,0.8 200.0,5.2 204.0,0.8 208.0,5.2 212.0,0.8 216.0,5.2 220.0,0.8" fill="none" stroke="#d65c5c" stroke-width="1.5"/></svg>
<svg style="position:absolute;left:2017px;top:358px;" width="11" height="18"><use href="#chevr"/></svg>
<svg style="position:absolute;left:2054px;top:354px;" width="27" height="32"><use href="#mvn"/></svg>
<div style="position:absolute;left:2086.00px;top:354.48px;font-family:'Liberation Sans', sans-serif;font-size:26.5px;line-height:1;white-space:pre;color:#bbbbbb;font-weight:normal;transform-origin:0 0;transform:scaleX(0.9810);">jeecms-form</div>
<svg style="position:absolute;left:2086px;top:380px" width="145" height="7"><polyline points="0.0,5.2 4.0,0.8 8.0,5.2 12.0,0.8 16.0,5.2 20.0,0.8 24.0,5.2 28.0,0.8 32.0,5.2 36.0,0.8 40.0,5.2 44.0,0.8 48.0,5.2 52.0,0.8 56.0,5.2 60.0,0.8 64.0,5.2 68.0,0.8 72.0,5.2 76.0,0.8 80.0,5.2 84.0,0.8 88.0,5.2 92.0,0.8 96.0,5.2 100.0,0.8 104.0,5.2 108.0,0.8 112.0,5.2 116.0,0.8 120.0,5.2 124.0,0.8 128.0,5.2 132.0,0.8 136.0,5.2 140.0,0.8" fill="none" stroke="#d65c5c" stroke-width="1.5"/></svg>
<svg style="position:absolute;left:2017px;top:398px;" width="11" height="18"><use href="#chevr"/></svg>
<svg style="position:absolute;left:2054px;top:394px;" width="27" height="32"><use href="#mvn"/></svg>
<div style="position:absolute;left:2086.00px;top:394.48px;font-family:'Liberation Sans', sans-serif;font-size:26.5px;line-height:1;white-space:pre;color:#bbbbbb;font-weight:normal;transform-origin:0 0;transform:scaleX(0.9945);">jeecms-front</div>
<svg style="position:absolute;left:2086px;top:420px" width="147" height="7"><polyline points="0.0,5.2 4.0,0.8 8.0,5.2 12.0,0.8 16.0,5.2 20.0,0.8 24.0,5.2 28.0,0.8 32.0,5.2 36.0,0.8 40.0,5.2 44.0,0.8 48.0,5.2 52.0,0.8 56.0,5.2 60.0,0.8 64.0,5.2 68.0,0.8 72.0,5.2 76.0,0.8 80.0,5.2 84.0,0.8 88.0,5.2 92.0,0.8 96.0,5.2 100.0,0.8 104.0,5.2 108.0,0.8 112.0,5.2 116.0,0.8 120.0,5.2 124.0,0.8 128.0,5.2 132.0,0.8 136.0,5.2 140.0,0.8 144.0,5.2" fill="none" stroke="#d65c5c" stroke-width="1.5"/></svg>
<svg style="position:absolute;left:2017px;top:438px;" width="11" height="18"><use href="#chevr"/></svg>
<svg style="position:absolute;left:2054px;top:434px;" width="27" height="32"><use href="#mvn"/></svg>
<div style="position:absolute;left:2086.00px;top:434.48px;font-family:'Liberation Sans', sans-serif;font-size:26.5px;line-height:1;white-space:pre;color:#bbbbbb;font-weight:normal;transform-origin:0 0;transform:scaleX(0.9599);">jeecms-lucene</div>
<svg style="position:absolute;left:2086px;top:460px" width="166" height="7"><polyline points="0.0,5.2 4.0,0.8 8.0,5.2 12.0,0.8 16.0,5.2 20.0,0.8 24.0,5.2 28.0,0.8 32.0,5.2 36.0,0.8 40.0,5.2 44.0,0.8 48.0,5.2 52.0,0.8 56.0,5.2 60.0,0.8 64.0,5.2 68.0,0.8 72.0,5.2 76.0,0.8 80.0,5.2 84.0,0.8 88.0,5.2 92.0,0.8 96.0,5.2 100.0,0.8 104.0,5.2 108.0,0.8 112.0,5.2 116.0,0.8 120.0,5.2 124.0,0.8 128.0,5.2 132.0,0.8 136.0,5.2 140.0,0.8 144.0,5.2 148.0,0.8 152.0,5.2 156.0,0.8 160.0,5.2 164.0,0.8" fill="none" stroke="#d65c5c" stroke-width="1.5"/></svg>
<svg style="position:absolute;left:2017px;top:478px;" width="11" height="18"><use href="#chevr"/></svg>
<svg style="position:absolute;left:2054px;top:474px;" width="27" height="32"><use href="#mvn"/></svg>
<div style="position:absolute;left:2086.00px;top:474.48px;font-family:'Liberation Sans', sans-serif;font-size:26.5px;line-height:1;white-space:pre;color:#bbbbbb;font-weight:normal;transform-origin:0 0;transform:scaleX(0.9834);">jeecms-mq-thread</div>
<svg style="position:absolute;left:2086px;top:500px" width="212" height="7"><polyline points="0.0,5.2 4.0,0.8 8.0,5.2 12.0,0.8 16.0,5.2 20.0,0.8 24.0,5.2 28.0,0.8 32.0,5.2 36.0,0.8 40.0,5.2 44.0,0.8 48.0,5.2 52.0,0.8 56.0,5.2 60.0,0.8 64.0,5.2 68.0,0.8 72.0,5.2 76.0,0.8 80.0,5.2 84.0,0.8 88.0,5.2 92.0,0.8 96.0,5.2 100.0,0.8 104.0,5.2 108.0,0.8 112.0,5.2 116.0,0.8 120.0,5.2 124.0,0.8 128.0,5.2 132.0,0.8 136.0,5.2 140.0,0.8 144.0,5.2 148.0,0.8 152.0,5.2 156.0,0.8 160.0,5.2 164.0,0.8 168.0,5.2 172.0,0.8 176.0,5.2 180.0,0.8 184.0,5.2 188.0,0.8 192.0,5.2 196.0,0.8 200.0,5.2 204.0,0.8 208.0,5.2" fill="none" stroke="#d65c5c" stroke-width="1.5"/></svg>
<svg style="position:absolute;left:2015px;top:521px;" width="18" height="11"><use href="#chevd"/></svg>
<svg style="position:absolute;left:2054px;top:514px;" width="27" height="32"><use href="#mvn"/></svg>
<div style="position:absolute;left:2086.00px;top:514.48px;font-family:'Liberation Sans', sans-serif;font-size:26.5px;line-height:1;white-space:pre;color:#bbbbbb;font-weight:normal;transform-origin:0 0;transform:scaleX(0.9767);">jeecms-parent</div>
<div style="position:absolute;left:2257.60px;top:514.48px;font-family:'Liberation Sans', sans-serif;font-size:26.5px;line-height:1;white-space:pre;color:#8c8c8c;font-weight:normal;transform-origin:0 0;transform:scaleX(0.9806);">(root)</div>
<svg style="position:absolute;left:2050px;top:561px;" width="18" height="11"><use href="#chevd"/></svg>
<svg style="position:absolute;left:2086px;top:555px;" width="31" height="29" viewBox="0 0 31 29"><path d="M0 0H12L15 3.5H26V13H15V22H0Z" fill="#87939a"/></svg>
<svg style="position:absolute;left:2103px;top:568px;fill:#40b6e0;" width="16" height="16"><use href="#gear"/></svg>
<div style="position:absolute;left:2122.40px;top:553.48px;font-family:'Liberation Sans', sans-serif;font-size:26.5px;line-height:1;white-space:pre;color:#bbbbbb;font-weight:normal;transform-origin:0 0;transform:scaleX(0.9311);">Lifecycle</div>
<svg style="position:absolute;left:2123px;top:595px;fill:#87939a;" width="26" height="26"><use href="#gear"/></svg>
<div style="position:absolute;left:2158.50px;top:593.98px;font-family:'Liberation Sans', sans-serif;font-size:26.5px;line-height:1;white-space:pre;color:#bbbbbb;font-weight:normal;transform-origin:0 0;transform:scaleX(0.9233);">clean</div>
<svg style="position:absolute;left:2123px;top:635px;fill:#87939a;" width="26" height="26"><use href="#gear"/></svg>
<div style="position:absolute;left:2158.50px;top:633.98px;font-family:'Liberation Sans', sans-serif;font-size:26.5px;line-height:1;white-space:pre;color:#bbbbbb;font-weight:normal;transform-origin:0 0;transform:scaleX(0.9579);">validate</div>
<svg style="position:absolute;left:2123px;top:675px;fill:#87939a;" width="26" height="26"><use href="#gear"/></svg>
<div style="position:absolute;left:2158.50px;top:673.98px;font-family:'Liberation Sans', sans-serif;font-size:26.5px;line-height:1;white-space:pre;color:#bbbbbb;font-weight:normal;transform-origin:0 0;transform:scaleX(0.9690);">compile</div>
<svg style="position:absolute;left:2123px;top:715px;fill:#87939a;" width="26" height="26"><use href="#gear"/></svg>
<div style="position:absolute;left:2158.50px;top:713.98px;font-family:'Liberation Sans', sans-serif;font-size:26.5px;line-height:1;white-space:pre;color:#bbbbbb;font-weight:normal;transform-origin:0 0;transform:scaleX(0.9715);">test</div>
<svg style="position:absolute;left:2123px;top:755px;fill:#87939a;" width="26" height="26"><use href="#gear"/></svg>
<div style="position:absolute;left:2158.50px;top:753.98px;font-family:'Liberation Sans', sans-serif;font-size:26.5px;line-height:1;white-space:pre;color:#bbbbbb;font-weight:normal;transform-origin:0 0;transform:scaleX(0.9331);">package</div>
<svg style="position:absolute;left:2123px;top:795px;fill:#87939a;" width="26" height="26"><use href="#gear"/></svg>
<div style="position:absolute;left:2158.50px;top:793.98px;font-family:'Liberation Sans', sans-serif;font-size:26.5px;line-height:1;white-space:pre;color:#bbbbbb;font-weight:normal;transform-origin:0 0;transform:scaleX(0.9553);">verify</div>
<svg style="position:absolute;left:2123px;top:835px;fill:#87939a;" width="26" height="26"><use href="#gear"/></svg>
<div style="position:absolute;left:2158.50px;top:833.98px;font-family:'Liberation Sans', sans-serif;font-size:26.5px;line-height:1;white-space:pre;color:#bbbbbb;font-weight:normal;transform-origin:0 0;transform:scaleX(0.9518);">install</div>
<div style="position:absolute;left:2306px;top:230px;width:16px;height:500px;background:rgba(255,255,255,0.09);"></div>
<div style="position:absolute;left:2002px;top:840px;width:266px;height:16px;background:rgba(255,255,255,0.18);"></div>
<div style="position:absolute;left:44px;top:856px;width:782px;height:2px;background:#323232;"></div>
<div style="position:absolute;left:2000px;top:856px;width:324px;height:2px;background:#323232;"></div>
<div style="position:absolute;left:44px;top:858px;width:2280px;height:2px;background:#323232;"></div>
<div style="position:absolute;left:44px;top:860px;width:2280px;height:52px;background:#3c4857;"></div>
<div style="position:absolute;left:56.70px;top:872.68px;font-family:'Liberation Sans', sans-serif;font-size:26.5px;line-height:1;white-space:pre;color:#bbbbbb;font-weight:normal;transform-origin:0 0;transform:scaleX(0.9246);">Build:</div>
<div style="position:absolute;left:159.00px;top:872.68px;font-family:'Liberation Sans', sans-serif;font-size:26.5px;line-height:1;white-space:pre;color:#d0d0d0;font-weight:normal;transform-origin:0 0;transform:scaleX(0.8825);">Sync</div>
<svg style="position:absolute;left:227px;top:881px;" width="15" height="14" viewBox="0 0 15 14"><path d="M1 1L14 13M14 1L1 13" stroke="#8c8c8c" stroke-width="1.8"/></svg>
<div style="position:absolute;left:289.00px;top:872.68px;font-family:'Liberation Sans', sans-serif;font-size:26.5px;line-height:1;white-space:pre;color:#bbbbbb;font-weight:normal;transform-origin:0 0;transform:scaleX(0.9976);">Build Output</div>
<svg style="position:absolute;left:450px;top:881px;" width="15" height="14" viewBox="0 0 15 14"><path d="M1 1L14 13M14 1L1 13" stroke="#8c8c8c" stroke-width="1.8"/></svg>
<div style="position:absolute;left:134px;top:908px;width:130px;height:5px;background:#4a88c7;"></div>
<svg style="position:absolute;left:2233px;top:873px;fill:#afb1b3;" width="26" height="26"><use href="#gear"/></svg>
<div style="position:absolute;left:2285px;top:883px;width:25px;height:4px;background:#afb1b3;"></div>
<div style="position:absolute;left:44px;top:912px;width:2280px;height:2px;background:#323232;"></div>
<div style="position:absolute;left:100px;top:914px;width:2px;height:406px;background:#323232;"></div>
<svg style="position:absolute;left:59px;top:931px;" width="27" height="26" viewBox="0 0 27 26"><path d="M21.5 9A9.5 9.5 0 0 0 4.5 8.5" fill="none" stroke="#afb1b3" stroke-width="3.4"/><path d="M0.5 1.5L1.5 12.5L10 8Z" fill="#afb1b3"/><path d="M5 17.5A9.5 9.5 0 0 0 22 18" fill="none" stroke="#afb1b3" stroke-width="3.4"/><path d="M26 25L25 14L16.5 18.5Z" fill="#afb1b3"/></svg>
<svg style="position:absolute;left:57px;top:982px;" width="30" height="30" viewBox="0 0 30 30"><path d="M16 1L29 14L25.5 15.5L21 13L13.5 20.5L14.5 25L11.5 27L3 18.5L5 15.5L9.5 16.5L17 9L14.5 4.5Z" fill="#afb1b3"/><path d="M7.5 22.5L1 29" stroke="#afb1b3" stroke-width="3"/></svg>
<svg style="position:absolute;left:57px;top:1038px;" width="33" height="29" viewBox="0 0 33 29"><path d="M1 10C6 1 22 1 27 10C22 19 6 19 1 10Z" fill="none" stroke="#afb1b3" stroke-width="3"/><circle cx="14" cy="10" r="4.5" fill="#afb1b3"/><path d="M22 23H33L27.5 29Z" fill="#afb1b3"/></svg>
<div style="position:absolute;left:102px;top:994px;width:646px;height:39px;background:#0d293e;"></div>
<svg style="position:absolute;left:117px;top:927px;" width="17" height="11"><use href="#chevd"/></svg>
<svg style="position:absolute;left:153px;top:921px;" width="26" height="26"><use href="#err"/></svg>
<div style="position:absolute;left:188.60px;top:920.18px;font-family:'Liberation Sans', sans-serif;font-size:26.5px;line-height:1;white-space:pre;color:#bbbbbb;font-weight:bold;transform-origin:0 0;transform:scaleX(0.8507);">Sync:</div>
<div style="position:absolute;left:258.80px;top:920.18px;font-family:'Liberation Sans', sans-serif;font-size:26.5px;line-height:1;white-space:pre;color:#8c8c8c;font-weight:normal;transform-origin:0 0;transform:scaleX(0.9785);">At 2021/8/31 10:54 with 1 err</div>
<div style="position:absolute;left:598.40px;top:920.18px;font-family:'Liberation Sans', sans-serif;font-size:26.5px;line-height:1;white-space:pre;color:#8c8c8c;font-weight:normal;transform-origin:0 0;transform:scaleX(0.8535);">2 sec, 944 ms</div>
<svg style="position:absolute;left:152.5px;top:967px;" width="17" height="11"><use href="#chevd"/></svg>
<svg style="position:absolute;left:189px;top:960px;" width="26" height="26"><use href="#err"/></svg>
<div style="position:absolute;left:225.00px;top:960.38px;font-family:'Liberation Sans', sans-serif;font-size:26.5px;line-height:1;white-space:pre;color:#bbbbbb;font-weight:normal;transform-origin:0 0;transform:scaleX(0.9473);">Resolve dependencies</div>
<div style="position:absolute;left:495.60px;top:960.38px;font-family:'Liberation Sans', sans-serif;font-size:26.5px;line-height:1;white-space:pre;color:#8c8c8c;font-weight:normal;transform-origin:0 0;transform:scaleX(0.9659);">1 error</div>
<div style="position:absolute;left:598.40px;top:960.38px;font-family:'Liberation Sans', sans-serif;font-size:26.5px;line-height:1;white-space:pre;color:#8c8c8c;font-weight:normal;transform-origin:0 0;transform:scaleX(0.8535);">1 sec, 633 ms</div>
<svg style="position:absolute;left:225px;top:1000px;" width="26" height="26"><use href="#err"/></svg>
<div style="position:absolute;left:102px;top:994px;width:646px;height:40px;overflow:hidden">
<div style="position:absolute;left:158.50px;top:5.98px;font-family:'Liberation Sans', sans-serif;font-size:26.5px;line-height:1;white-space:pre;color:#dcdcdc;font-weight:normal;transform-origin:0 0;transform:scaleX(0.9655);">Cannot resolve com.kingbase:dialect-for-hibernate:5.2.17</div>
</div>
<div style="position:absolute;left:104px;top:1302px;width:506px;height:16px;background:#5b5b5c;"></div>
<div style="position:absolute;left:748px;top:914px;width:2px;height:406px;background:#323232;"></div>
<div style="position:absolute;left:750px;top:914px;width:1518px;height:406px;background:#2b2b2b;"></div>
<div style="position:absolute;left:775.00px;top:923.12px;font-family:'Liberation Mono', monospace;font-size:30.5px;line-height:1;white-space:pre;color:#ee7472;font-weight:normal;transform-origin:0 0;transform:scaleX(0.8732);">Cannot resolve com.kingbase:dialect-for-hibernate:5.2.17</div>
<div style="position:absolute;left:774px;top:962px;width:4px;height:36px;background:#c4c4c4;"></div>
<div style="position:absolute;left:2268px;top:914px;width:56px;height:406px;background:#3c3f41;"></div>
<svg style="position:absolute;left:2284px;top:931px;" width="25" height="29" viewBox="0 0 25 29"><rect x="0" y="0" width="24" height="3" fill="#afb1b3"/><rect x="0" y="22" width="6" height="3" fill="#afb1b3"/><path d="M0 11H18A5.5 5.5 0 0 1 18 22H13" fill="none" stroke="#afb1b3" stroke-width="3"/><path d="M7 22L14 16V28Z" fill="#afb1b3"/></svg>
<svg style="position:absolute;left:2274px;top:974px;" width="44" height="44" viewBox="0 0 44 44"><rect x="0" y="0" width="44" height="44" rx="5" fill="#5c5f61"/></svg>
<svg style="position:absolute;left:2284px;top:982px;" width="25" height="24" viewBox="0 0 25 24"><rect x="0" y="3" width="7" height="3" fill="#afb1b3"/><rect x="0" y="11" width="7" height="3" fill="#afb1b3"/><rect x="0" y="20" width="24" height="3" fill="#afb1b3"/><rect x="15.5" y="0" width="3" height="12" fill="#afb1b3"/><path d="M9 10H25L17 17Z" fill="#afb1b3"/></svg>
<div style="position:absolute;left:0px;top:1320px;width:2366px;height:2px;background:#323232;"></div>
<div style="position:absolute;left:944px;top:1322px;width:125px;height:42px;background:#2f3133;"></div>
<svg style="position:absolute;left:64px;top:1335px;" width="17" height="20" viewBox="0 0 17 20"><path d="M0 0L17 10L0 20Z" fill="#afb1b3"/></svg>
<div style="position:absolute;left:95.00px;top:1332.47px;font-family:'Liberation Sans', sans-serif;font-size:26.5px;line-height:1;white-space:pre;color:#bbbbbb;font-weight:normal;transform-origin:0 0;transform:scaleX(0.8144);">Run</div>
<svg style="position:absolute;left:178px;top:1336px;" width="20" height="17" viewBox="0 0 20 17"><rect x="0" y="0" width="4" height="3.5" fill="#afb1b3"/><rect x="6" y="0" width="14" height="3.5" fill="#afb1b3"/><rect x="0" y="6.7" width="4" height="3.5" fill="#afb1b3"/><rect x="6" y="6.7" width="14" height="3.5" fill="#afb1b3"/><rect x="0" y="13.5" width="4" height="3.5" fill="#afb1b3"/><rect x="6" y="13.5" width="14" height="3.5" fill="#afb1b3"/></svg>
<div style="position:absolute;left:208.00px;top:1332.47px;font-family:'Liberation Sans', sans-serif;font-size:26.5px;line-height:1;white-space:pre;color:#bbbbbb;font-weight:normal;transform-origin:0 0;transform:scaleX(0.8544);">TODO</div>
<svg style="position:absolute;left:318px;top:1334px;" width="21" height="21" viewBox="0 0 21 21"><circle cx="10.5" cy="10.5" r="10.5" fill="#afb1b3"/><rect x="9" y="4" width="3" height="8.5" fill="#3c3f41"/><rect x="9" y="14.5" width="3" height="3" fill="#3c3f41"/></svg>
<div style="position:absolute;left:350.00px;top:1332.47px;font-family:'Liberation Sans', sans-serif;font-size:26.5px;line-height:1;white-space:pre;color:#bbbbbb;font-weight:normal;transform-origin:0 0;transform:scaleX(0.8692);">Problems</div>
<svg style="position:absolute;left:489px;top:1331px;" width="28" height="27" viewBox="0 0 28 27"><circle cx="11" cy="11.5" r="9.5" fill="none" stroke="#afb1b3" stroke-width="2.6"/><path d="M11.5 6.5V12L8.5 15" stroke="#afb1b3" stroke-width="2" fill="none"/><path d="M14 12L27.5 19.5L14 27Z" fill="#afb1b3" stroke="#3c3f41" stroke-width="2"/></svg>
<div style="position:absolute;left:525.00px;top:1332.47px;font-family:'Liberation Sans', sans-serif;font-size:26.5px;line-height:1;white-space:pre;color:#bbbbbb;font-weight:normal;transform-origin:0 0;transform:scaleX(0.8755);">Profiler</div>
<svg style="position:absolute;left:642px;top:1335px;" width="22" height="20" viewBox="0 0 22 20"><rect x="0" y="0" width="22" height="20" fill="#afb1b3"/><path d="M4 5L9 9L4 13" stroke="#3c3f41" stroke-width="2" fill="none"/><rect x="10" y="14" width="8" height="2" fill="#3c3f41"/></svg>
<div style="position:absolute;left:673.50px;top:1332.47px;font-family:'Liberation Sans', sans-serif;font-size:26.5px;line-height:1;white-space:pre;color:#bbbbbb;font-weight:normal;transform-origin:0 0;transform:scaleX(0.9117);">Terminal</div>
<svg style="position:absolute;left:807px;top:1333px;" width="26" height="24" viewBox="0 0 26 24"><path d="M6 0H20L26 12L20 24H6L0 12Z" fill="#afb1b3"/><path d="M10 6L19 12L10 18Z" fill="#3c3f41"/></svg>
<div style="position:absolute;left:842.00px;top:1332.47px;font-family:'Liberation Sans', sans-serif;font-size:26.5px;line-height:1;white-space:pre;color:#bbbbbb;font-weight:normal;transform-origin:0 0;transform:scaleX(0.8226);">Services</div>
<svg style="position:absolute;left:963px;top:1332px;" width="28" height="26" viewBox="0 0 28 26"><path d="M1 10.5L10 1.5H16V3L12 6.5L4 14Z" fill="#afb1b3"/><path d="M8 9L12 5.5L27 20.5L23 24.5Z" fill="#afb1b3"/></svg>
<div style="position:absolute;left:998.00px;top:1332.47px;font-family:'Liberation Sans', sans-serif;font-size:26.5px;line-height:1;white-space:pre;color:#e0e0e0;font-weight:normal;transform-origin:0 0;transform:scaleX(0.8976);">Build</div>
<svg style="position:absolute;left:1091px;top:1332px;" width="27" height="26" viewBox="0 0 27 26"><circle cx="15" cy="5" r="4.5" fill="#afb1b3"/><circle cx="5" cy="21" r="4.5" fill="#afb1b3"/><circle cx="22" cy="21" r="4.5" fill="#afb1b3"/><path d="M15 5L5 21M15 5L22 21" stroke="#afb1b3" stroke-width="2.6"/></svg>
<div style="position:absolute;left:1126.70px;top:1332.47px;font-family:'Liberation Sans', sans-serif;font-size:26.5px;line-height:1;white-space:pre;color:#bbbbbb;font-weight:normal;transform-origin:0 0;transform:scaleX(0.8899);">Endpoints</div>
<svg style="position:absolute;left:1281px;top:1333px;" width="24" height="24" viewBox="0 0 24 24"><path d="M12 0L24 6L12 12L0 6Z" fill="#afb1b3"/><path d="M0 11L12 17L24 11" fill="none" stroke="#afb1b3" stroke-width="2.6"/><path d="M0 17L12 23L24 17" fill="none" stroke="#afb1b3" stroke-width="2.6"/></svg>
<div style="position:absolute;left:1314.00px;top:1332.47px;font-family:'Liberation Sans', sans-serif;font-size:26.5px;line-height:1;white-space:pre;color:#bbbbbb;font-weight:normal;transform-origin:0 0;transform:scaleX(0.8717);">Dependencies</div>
<svg style="position:absolute;left:1504px;top:1334px;" width="26" height="20" viewBox="0 0 26 20"><path d="M1 18C0 8 12 3 20 3C23 3 25 1 26 0C27 7 23 15 15 18C9 20 4 20 1 18Z" fill="#afb1b3"/><path d="M4 17C9 12 14 9 20 7" stroke="#3c3f41" stroke-width="1.5" fill="none"/></svg>
<div style="position:absolute;left:1537.70px;top:1332.47px;font-family:'Liberation Sans', sans-serif;font-size:26.5px;line-height:1;white-space:pre;color:#bbbbbb;font-weight:normal;transform-origin:0 0;transform:scaleX(0.8863);">Spring</div>
<svg style="position:absolute;left:2166px;top:1331px;" width="27" height="27" viewBox="0 0 27 27"><path d="M13.5 1A12.5 12.5 0 1 0 13.5 26H26V13.5A12.5 12.5 0 0 0 13.5 1Z" fill="#499c54"/><path d="M10 8.5L14 6H15.8V21H12.6V10L10 11.5Z" fill="#fff"/></svg>
<div style="position:absolute;left:2200.60px;top:1332.47px;font-family:'Liberation Sans', sans-serif;font-size:26.5px;line-height:1;white-space:pre;color:#bbbbbb;font-weight:normal;transform-origin:0 0;transform:scaleX(0.8563);">Event Log</div>
<div style="position:absolute;left:0px;top:1364px;width:2366px;height:2px;background:#404244;"></div>
<svg style="position:absolute;left:12px;top:1374px;" width="25" height="25" viewBox="0 0 25 25"><path d="M1 6V24H19" fill="none" stroke="#afb1b3" stroke-width="2"/><rect x="6" y="1" width="18" height="18" fill="none" stroke="#afb1b3" stroke-width="2"/></svg>
<div style="position:absolute;left:53.90px;top:1371.47px;font-family:'Liberation Sans', sans-serif;font-size:26.5px;line-height:1;white-space:pre;color:#bbbbbb;font-weight:normal;transform-origin:0 0;transform:scaleX(0.9753);">JPA Buddy: Default persistence unit initialized // Change settings (today 9:04)</div>
<div style="position:absolute;left:2262.00px;top:1371.47px;font-family:'Liberation Sans', sans-serif;font-size:26.5px;line-height:1;white-space:pre;color:#bbbbbb;font-weight:normal;transform-origin:0 0;transform:scaleX(0.8414);">2:1</div>
<svg style="position:absolute;left:2315px;top:1371px;" width="34" height="33" viewBox="0 0 34 33"><path fill-rule="evenodd" fill="#c75450" d="M6 21C2 21 0 18 0 14.5C0 11 3 8.5 6.5 9C8 3.5 12 0.5 17 0.5C22 0.5 26 4 27 8.5C30 9 31.5 11.5 31 14L27 15.5L21 21ZM14.5 3.5H17.5V12.5H14.5ZM14.5 14.5H17.5V17.5H14.5Z"/><g transform="translate(25,25)"><path d="M9.47 3.32 L10.03 0.34 L15.97 0.34 L16.53 3.32 L17.08 3.54 L17.62 3.80 L18.15 4.08 L18.66 4.39 L19.15 4.74 L19.62 5.11 L22.47 4.10 L25.45 9.25 L23.14 11.22 L23.23 11.81 L23.28 12.40 L23.30 13.00 L23.28 13.60 L23.23 14.19 L23.14 14.78 L25.45 16.75 L22.47 21.90 L19.62 20.89 L19.15 21.26 L18.66 21.61 L18.15 21.92 L17.62 22.20 L17.08 22.46 L16.53 22.68 L15.97 25.66 L10.03 25.66 L9.47 22.68 L8.92 22.46 L8.38 22.20 L7.85 21.92 L7.34 21.61 L6.85 21.26 L6.38 20.89 L3.53 21.90 L0.55 16.75 L2.86 14.78 L2.77 14.19 L2.72 13.60 L2.70 13.00 L2.72 12.40 L2.77 11.81 L2.86 11.22 L0.55 9.25 L3.53 4.10 L6.38 5.11 L6.85 4.74 L7.34 4.39 L7.85 4.08 L8.38 3.80 L8.92 3.54 Z M17.70 13.00 A4.7 4.7 0 1 0 8.30 13.00 A4.7 4.7 0 1 0 17.70 13.00 Z" transform="translate(-6.5,-6.5) scale(0.5)" fill="#afb1b3" fill-rule="evenodd"/></g></svg>
</body></html>
